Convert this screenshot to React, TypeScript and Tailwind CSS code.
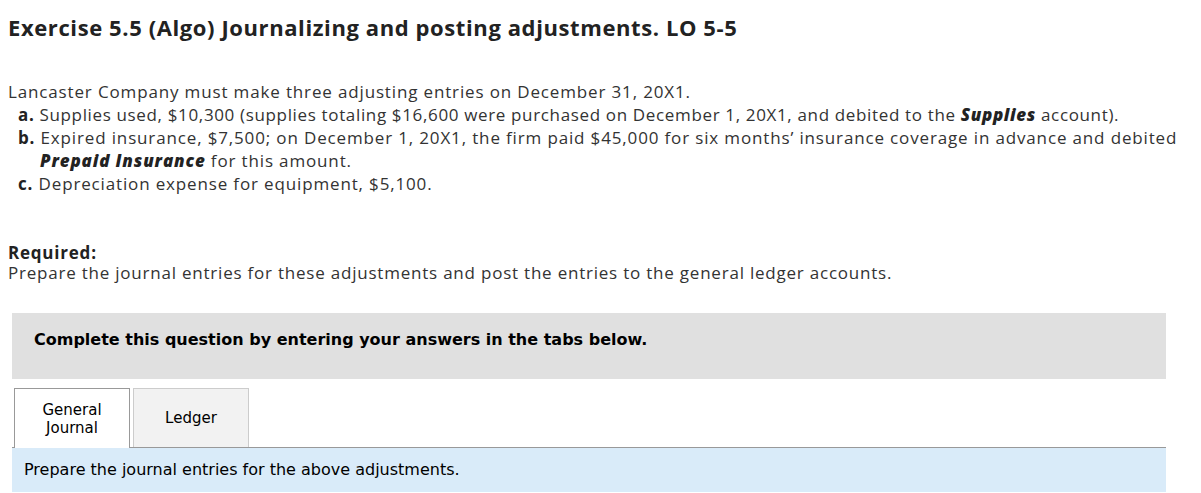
export default function App() {
  const body = { fontFamily: "'Open Sans', Lato, sans-serif" };
  const verd = { fontFamily: "'DejaVu Sans', Verdana, sans-serif" };
  return (
    <div className="w-[1201px] h-[493px] bg-white text-[#222] overflow-hidden" style={body}>
      <h1 className="pl-[8px] pt-[12px] text-[22px] font-bold leading-[30px] tracking-[0.6px] text-[#222]">
        Exercise 5.5 (Algo) Journalizing and posting adjustments. LO 5-5
      </h1>
      <div className="pl-[8px] pt-[38px] text-[17px] leading-[23px] tracking-[0.85px] text-[#333]">
        <p>Lancaster Company must make three adjusting entries on December 31, 20X1.</p>
        <p className="pl-[10px] whitespace-nowrap tracking-[0.65px]">
          <b className="font-bold text-[#222]">a.</b> Supplies used, $10,300 (supplies totaling $16,600 were purchased on December 1, 20X1, and debited to the{" "}
          <b className="font-extrabold italic text-[#222]">Supplies</b> account).
        </p>
        <p className="pl-[10px] whitespace-nowrap">
          <b className="font-bold text-[#222]">b.</b> Expired insurance, $7,500; on December 1, 20X1, the firm paid $45,000 for six months’ insurance coverage in advance and debited
        </p>
        <p className="pl-[32px]">
          <b className="font-extrabold italic text-[#222]">Prepaid Insurance</b> for this amount.
        </p>
        <p className="pl-[10px]">
          <b className="font-bold text-[#222]">c.</b> Depreciation expense for equipment, $5,100.
        </p>
      </div>
      <div className="pl-[8px] pt-[48px] text-[17px] leading-[20px] tracking-[0.78px] text-[#333]">
        <p className="font-bold text-[#222]">Required:</p>
        <p>Prepare the journal entries for these adjustments and post the entries to the general ledger accounts.</p>
      </div>
      <div className="ml-[12px] mt-[30px] w-[1154px]" style={verd}>
        <div className="h-[66px] bg-[#e0e0e0] pt-[17px] pl-[22px] text-[16px] leading-[20px] font-bold text-black">
          Complete this question by entering your answers in the tabs below.
        </div>
        <div className="mt-[9px] flex items-end gap-[3px] pl-[2px] border-b border-[#999]">
          <div className="w-[116px] h-[60px] -mb-px bg-white border border-b-0 border-[#999] flex items-center justify-center text-center text-[15px] leading-[18px] text-black">
            General<br />Journal
          </div>
          <div className="w-[116px] h-[59px] bg-[#f2f2f2] border border-b-0 border-[#ccc] flex items-center justify-center text-[15px] text-black">
            Ledger
          </div>
        </div>
        <div className="h-[44px] bg-[#d9ebf9] flex items-center pl-[12px] text-[16px] text-black">
          Prepare the journal entries for the above adjustments.
        </div>
      </div>
    </div>
  );
}
